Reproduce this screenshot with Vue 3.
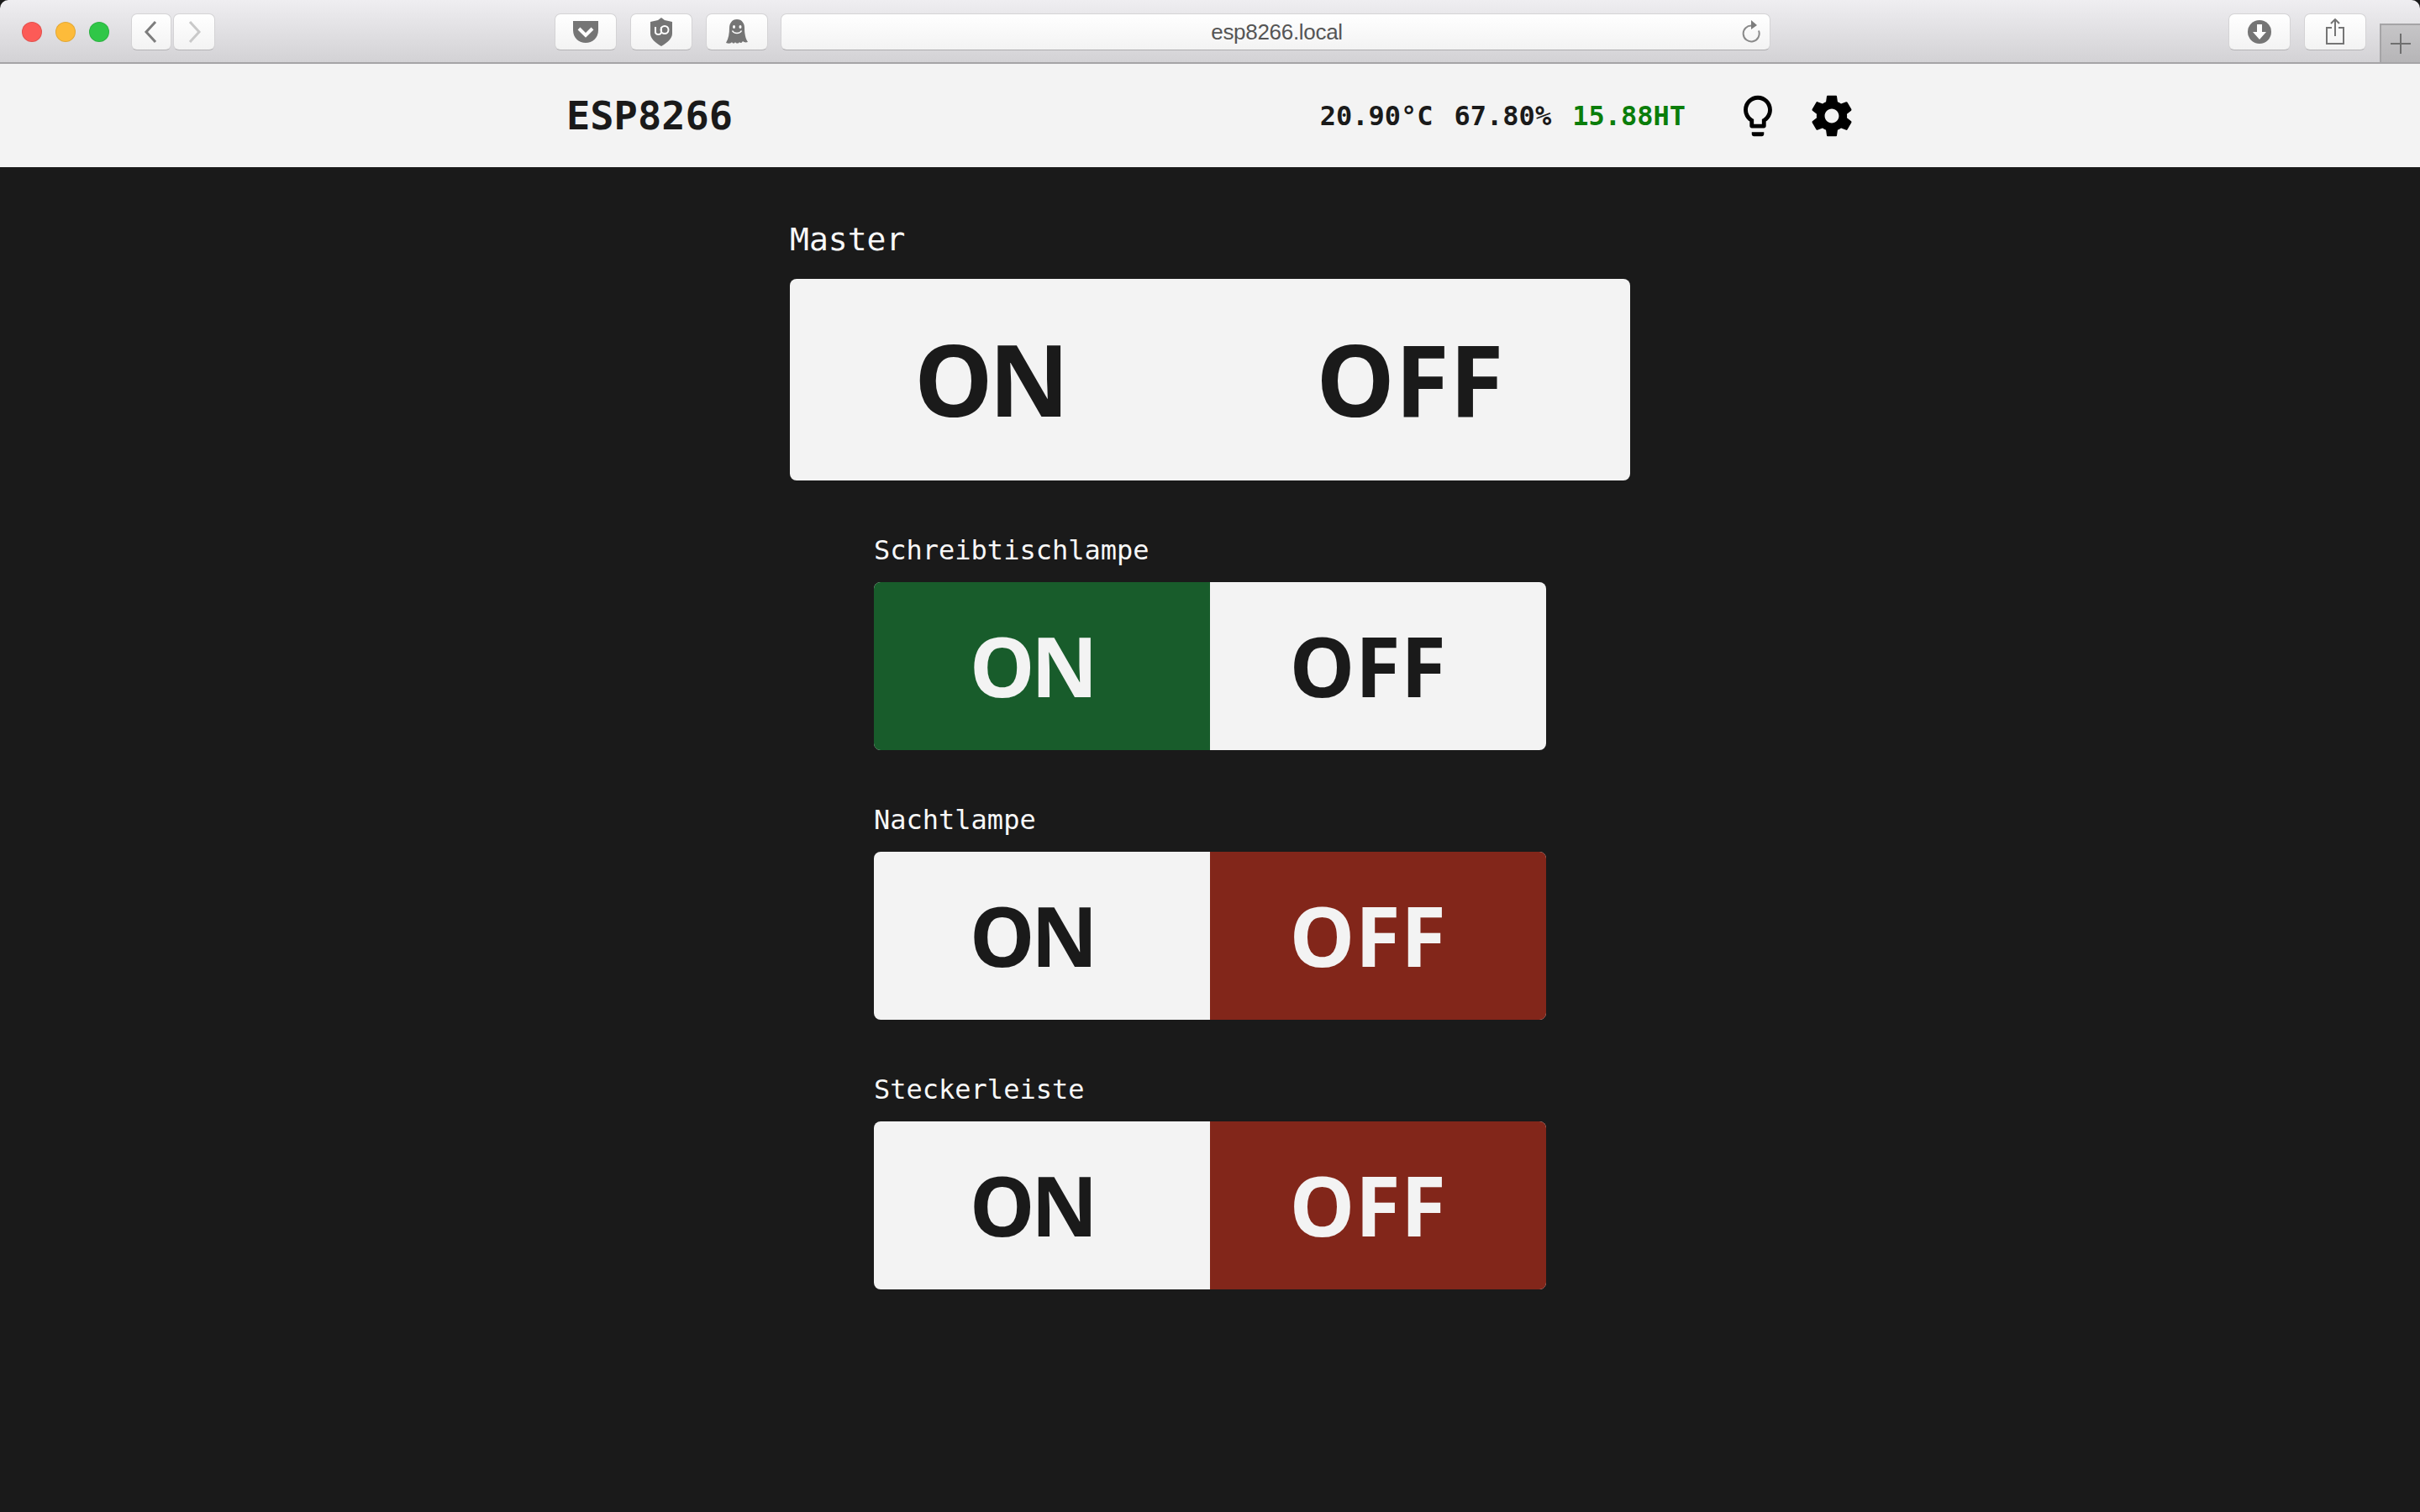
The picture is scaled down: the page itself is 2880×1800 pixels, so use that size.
<script setup>
const switches = [
  { name: "Schreibtischlampe", state: "on" },
  { name: "Nachtlampe", state: "off" },
  { name: "Steckerleiste", state: "off" },
];
</script>

<template>
  <div class="browser">
    <div class="toolbar">
      <div class="lights">
        <span class="light red"></span>
        <span class="light yellow"></span>
        <span class="light green"></span>
      </div>
      <div class="history">
        <button class="tool back">
          <svg width="20" height="28" viewBox="0 0 20 28"><path d="M15 2 4 14l11 12" fill="none" stroke="#7d7d7d" stroke-width="3" /></svg>
        </button>
        <button class="tool forward">
          <svg width="20" height="28" viewBox="0 0 20 28"><path d="M5 2l11 12L5 26" fill="none" stroke="#c9c9c9" stroke-width="3" /></svg>
        </button>
      </div>
      <div class="extensions">
        <button class="tool wide">
          <svg width="32" height="28" viewBox="0 0 32 28">
            <path d="M1 1h30v11c0 9-7 15-15 15S1 21 1 12z" fill="#757575" />
            <path d="M8 10l8 8 8-8" fill="none" stroke="#fff" stroke-width="4" />
          </svg>
        </button>
        <button class="tool wide">
          <svg width="30" height="34" viewBox="0 0 30 34">
            <path d="M15 0l4 3 9 2 0 14c0 6-6 11-13 15C8 30 2 25 2 19V5l9-2z" fill="#757575" />
            <path d="M8 11v7a4 4 0 0 0 7 0v-7" fill="none" stroke="#fff" stroke-width="2" />
            <circle cx="19" cy="14.500" r="4.500" fill="none" stroke="#fff" stroke-width="2" />
          </svg>
        </button>
        <button class="tool wide">
          <svg width="26" height="30" viewBox="0 0 26 30">
            <path d="M13 0c6 0 9 5 9 10 0 6 1 13 4 17-3 1-5 0-6-1-1 2-3 3-4 1-1 2-4 2-5 0-1 2-3 2-4 0-1 2-4 2-7 1 3-5 4-11 4-18C4 5 7 0 13 0z" fill="#757575" />
            <ellipse cx="9.500" cy="9" rx="1.500" ry="2" fill="#fff" />
            <ellipse cx="17" cy="9" rx="1.500" ry="2" fill="#fff" />
            <path d="M7.500 13.500c2 4 9 4 11 0" fill="none" stroke="#fff" stroke-width="1.500" />
          </svg>
        </button>
      </div>
      <div class="address">
        <span class="url">esp8266.local</span>
        <svg class="reload" width="24" height="28" viewBox="0 0 24 28">
          <path d="M14 7.500a9.500 9.500 0 1 0 8 6" fill="none" stroke="#8a8a8a" stroke-width="2" />
          <path d="M13 1l7 6-7 5z" fill="#7d7d7d" />
        </svg>
      </div>
      <div class="actions">
        <button class="tool wide">
          <svg width="28" height="28" viewBox="0 0 28 28">
            <circle cx="14" cy="14" r="14" fill="#757575" />
            <path d="M11 5h6v9h5l-8 9-8-9h5z" fill="#fff" />
          </svg>
        </button>
        <button class="tool wide">
          <svg width="24" height="32" viewBox="0 0 24 32">
            <path d="M8 11H2v19h20V11h-6" fill="none" stroke="#757575" stroke-width="2" />
            <path d="M12 21V2M7 6l5-5 5 5" fill="none" stroke="#757575" stroke-width="2" />
          </svg>
        </button>
      </div>
      <div class="newtab">
        <svg width="24" height="24" viewBox="0 0 24 24"><path d="M0 12h24M12 0v24" stroke="#6f6f6f" stroke-width="2" /></svg>
      </div>
    </div>

    <header class="nav">
      <div class="brand">ESP8266</div>
      <div class="nav-right">
        <div class="stats">
          <span>20.90°C</span>
          <span>67.80%</span>
          <span class="heat">15.88HT</span>
        </div>
        <svg class="icon" viewBox="0 0 24 24">
          <path d="M9 21c0 .55.45 1 1 1h4c.55 0 1-.45 1-1v-1H9v1zm3-19C8.140 2 5 5.140 5 9c0 2.380 1.190 4.470 3 5.740V17c0 .55.45 1 1 1h6c.55 0 1-.45 1-1v-2.260c1.810-1.270 3-3.360 3-5.740 0-3.860-3.140-7-7-7zm2.850 11.100l-.85.6V16h-4v-2.300l-.85-.6C7.800 12.160 7 10.630 7 9c0-2.760 2.240-5 5-5s5 2.240 5 5c0 1.630-.8 3.160-2.150 4.100z" />
        </svg>
        <svg class="icon gear" viewBox="0 0 24 24">
          <path d="M19.430 12.980c.04-.32.07-.64.07-.98s-.03-.66-.07-.98l2.110-1.650c.19-.15.24-.42.12-.64l-2-3.460c-.12-.22-.39-.3-.61-.22l-2.490 1c-.52-.4-1.080-.73-1.690-.98l-.38-2.650C14.460 2.180 14.250 2 14 2h-4c-.25 0-.46.18-.49.420l-.38 2.650c-.61.25-1.170.59-1.690.98l-2.490-1c-.23-.09-.49 0-.61.22l-2 3.460c-.13.22-.07.49.12.64l2.110 1.650c-.04.32-.07.65-.07.98s.03.66.07.98l-2.110 1.650c-.19.15-.24.42-.12.64l2 3.460c.12.22.39.3.61.22l2.490-1c.52.4 1.080.73 1.690.98l.38 2.650c.03.24.24.42.49.42h4c.25 0 .46-.18.49-.42l.38-2.650c.61-.25 1.170-.59 1.690-.98l2.490 1c.23.09.49 0 .61-.22l2-3.460c.12-.22.07-.49-.12-.64l-2.110-1.650zM12 15.500c-1.930 0-3.500-1.570-3.500-3.500s1.570-3.500 3.500-3.500 3.500 1.570 3.500 3.500-1.570 3.500-3.500 3.500z" />
        </svg>
      </div>
    </header>

    <main class="content">
      <section class="group master">
        <div class="label">Master</div>
        <div class="toggle">
          <div class="half on-text">ON</div>
          <div class="half off-text">OFF</div>
        </div>
      </section>
      <section v-for="item in switches" :key="item.name" class="group sub">
        <div class="label">{{ item.name }}</div>
        <div class="toggle">
          <div :class="['half on-text', item.state === 'on' ? 'is-on' : '']">ON</div>
          <div :class="['half off-text', item.state === 'off' ? 'is-off' : '']">OFF</div>
        </div>
      </section>
    </main>
  </div>
</template>

<style>
html,
body {
  background: #1a1a1a;
}
</style>

<style scoped>
.browser {
  width: 2880px;
  height: 1800px;
  background: #1a1a1a;
  overflow: hidden;
}

.toolbar {
  height: 74px;
  box-sizing: content-box;
  display: flex;
  position: relative;
  background: linear-gradient(#efeef1, #d3d2d5);
  border-bottom: 2px solid #a5a4a6;
  border-radius: 10px 10px 0 0;
}

.lights {
  display: flex;
  gap: 16px;
  padding: 26px 0 0 26px;
  width: 130px;
  box-sizing: border-box;
}

.light {
  width: 24px;
  height: 24px;
  border-radius: 50%;
  box-sizing: border-box;
  border: 1px solid rgba(0, 0, 0, 0.1);
}

.red {
  background: #fc5b57;
}

.yellow {
  background: #fdbb3a;
}

.green {
  background: #30c748;
}

.tool {
  display: flex;
  align-items: center;
  justify-content: center;
  height: 44px;
  padding: 0;
  border: 1px solid #d4d3d5;
  border-bottom-color: #b4b3b5;
  border-radius: 7px;
  background: linear-gradient(#ffffff, #f3f3f3);
  box-sizing: border-box;
}

.history {
  display: flex;
  gap: 2px;
  margin: 16px 0 0 26px;
}

.back {
  width: 48px;
}

.forward {
  width: 50px;
}

.wide {
  width: 74px;
}

.extensions {
  display: flex;
  gap: 16px;
  margin: 16px 0 0 404px;
}

.address {
  width: 1178px;
  height: 44px;
  margin: 16px 0 0 15px;
  box-sizing: border-box;
  display: flex;
  align-items: center;
  justify-content: center;
  position: relative;
  border: 1px solid #d4d3d5;
  border-bottom-color: #adacae;
  border-radius: 7px;
  background: linear-gradient(#ffffff, #f3f3f3);
}

.url {
  font-family: "Liberation Sans", sans-serif;
  font-size: 26px;
  color: #555555;
  letter-spacing: -0.3px;
  padding-left: 3px;
}

.reload {
  position: absolute;
  right: 11px;
  top: 6px;
}

.actions {
  display: flex;
  gap: 16px;
  margin: 16px 0 0 545px;
}

.newtab {
  position: absolute;
  right: 0;
  top: 28px;
  width: 48px;
  height: 46px;
  box-sizing: border-box;
  background: linear-gradient(#c6c5c7, #b6b5b7);
  border-left: 2px solid #a5a4a6;
  border-top: 2px solid #a5a4a6;
  display: flex;
  align-items: center;
  justify-content: center;
}

.nav {
  height: 123px;
  background: #f3f3f3;
  display: flex;
  align-items: center;
  justify-content: space-between;
  padding: 0 671px 0 672px;
  font-family: "DejaVu Sans Mono", monospace;
  font-weight: 700;
  color: #1a1a1a;
}

.brand {
  font-size: 47px;
  padding-left: 2px;
}

.nav-right {
  display: flex;
  align-items: center;
}

.stats {
  display: flex;
  gap: 25px;
  font-size: 32px;
  margin-right: 27px;
}

.heat {
  color: #0a7d0a;
}

.icon {
  width: 58px;
  height: 58px;
  margin-left: 30px;
  fill: #000000;
  display: block;
}

.gear {
  margin-left: 30px;
}

.content {
  display: flex;
  flex-direction: column;
  align-items: center;
  padding-top: 62px;
  font-family: "DejaVu Sans Mono", monospace;
}

.group.master {
  width: 1000px;
  margin-bottom: 59px;
}

.group.sub {
  width: 800px;
  margin-bottom: 59px;
}

.label {
  color: #f8f8f8;
  line-height: 48px;
}

.master .label {
  font-size: 38px;
  margin-bottom: 23px;
}

.sub .label {
  font-size: 32px;
  margin-bottom: 14px;
}

.toggle {
  display: flex;
  background: #f3f3f3;
  border-radius: 8px;
  overflow: hidden;
  font-family: "Noto Sans", sans-serif;
  font-weight: 700;
  color: #1a1a1a;
}

.half {
  flex: 1;
  display: flex;
  align-items: center;
  justify-content: center;
  padding-right: 24px;
  padding-bottom: 3px;
}

.master .toggle {
  height: 240px;
  font-size: 118px;
}

.master .on-text {
  letter-spacing: -5px;
}

.master .off-text {
  letter-spacing: 0;
}

.sub .toggle {
  height: 200px;
  font-size: 98px;
}

.sub .on-text {
  letter-spacing: -4.500px;
}

.sub .off-text {
  letter-spacing: 0.500px;
}

.is-on {
  background: #185c2b;
  color: #f3f3f3;
}

.is-off {
  background: #82261a;
  color: #f3f3f3;
}
</style>
